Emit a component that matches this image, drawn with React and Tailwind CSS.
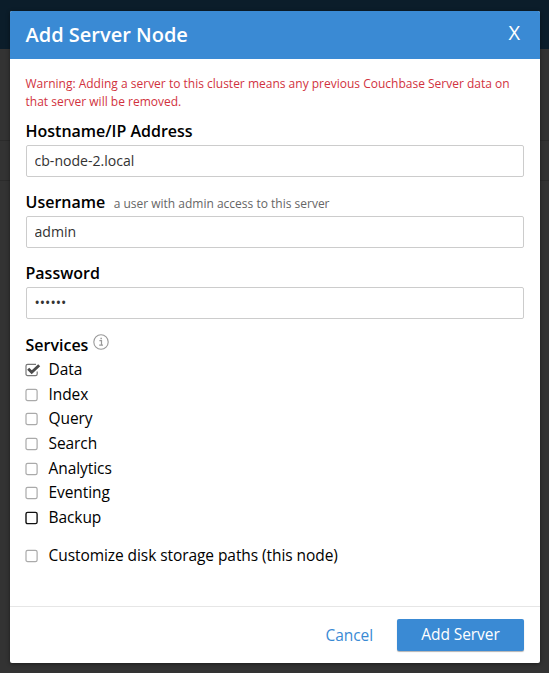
const services = ['Data', 'Index', 'Query', 'Search', 'Analytics', 'Eventing', 'Backup'];

function Box({ checked, strong }) {
  return (
    <svg className="mt-px mr-2 -ml-[0.5px] h-[14px] w-[15.5px] shrink-0" viewBox="0 0 15.5 14" fill="none">
      <path
        d={checked ? 'M12.2 8.5V10.9Q12.2 12.6 10.5 12.6H2.7Q1 12.6 1 10.9V3.1Q1 1.4 2.7 1.4H11' : 'M2.7 1.4H10.4Q12.1 1.4 12.1 3.1V10.9Q12.1 12.6 10.4 12.6H2.7Q1 12.6 1 10.9V3.1Q1 1.4 2.7 1.4Z'}
        stroke={checked ? '#777' : strong ? '#111' : '#aaa'}
        strokeWidth={strong ? 1.4 : 1.2}
      />
      {checked && <path d="M3.2 5.8 6.7 9.3 14.2 2.2" stroke="#4a4a4a" strokeWidth="2.9" />}
    </svg>
  );
}

function Field({ label, hint, type = 'text', value }) {
  return (
    <label className="block h-[71px]">
      <span className="flex h-[27px] items-baseline text-[16px] leading-[27px] font-semibold text-black">
        {label}
        {hint && <span className="ml-[8.4px] text-[12px] font-normal text-[#666]">{hint}</span>}
      </span>
      <input
        type={type}
        defaultValue={value}
        className="block h-8 w-full rounded-[2px] border border-[#ccc] bg-white px-2 pb-[2px] text-[14.08px] text-[#333] outline-none"
      />
    </label>
  );
}

export default function App() {
  return (
    <div className="h-[673px] w-[549px] overflow-hidden bg-[linear-gradient(#0b1d2a_49px,#333_49px,#333_140px,#2b2b2b_140px,#2b2b2b_141px,#333_141px,#333_180px,#2b2b2b_180px,#2b2b2b_181px,#333_181px)] px-[10px] pt-[11px] pr-[9px] font-['Open_Sans',sans-serif]">
      <div className="flex h-[652px] w-[530px] flex-col overflow-hidden rounded-[2px] bg-white shadow-[0_1px_4px_rgba(0,0,0,0.45)]">
        <header className="flex h-12 shrink-0 items-center justify-between bg-[#3a8ad4] pr-5 pl-[15.5px] text-white">
          <h2 className="text-[20px] font-semibold">Add Server Node</h2>
          <button className="pb-[4px] text-[20px]">X</button>
        </header>
        <main className="flex-1 pt-4 pr-4 pl-[15.5px]">
          <p className="mb-[11px] h-9 text-[12px] leading-[18px] text-[#d1323e]">
            Warning: Adding a server to this cluster means any previous Couchbase Server data on that server will be removed.
          </p>
          <div className="-mt-[4px]">
            <Field label="Hostname/IP Address" value="cb-node-2.local" />
            <Field label="Username" hint="a user with admin access to this server" value="admin" />
            <Field label="Password" type="password" value="123456" />
          </div>
          <div className="mb-[0.4px] flex h-[26px] items-center pt-[1px] text-[16px] font-semibold">
            Services
            <svg className="mb-[5px] ml-[4.5px] h-4 w-4" viewBox="0 0 16 16" fill="none" stroke="#999">
              <circle cx="8" cy="8" r="7.2" strokeWidth="1.1" />
              <path d="M6.4 6.7H8.5V11M6.2 11.2H10" strokeWidth="1.2" />
              <path d="M7.4 4.5H8.9" strokeWidth="1.5" />
            </svg>
          </div>
          {services.map((name) => (
            <label key={name} className="flex h-[24.64px] items-center text-[15.5px] tracking-[-0.07px] text-black">
              <Box checked={name === 'Data'} strong={name === 'Backup'} />
              {name}
            </label>
          ))}
          <label className="mt-[13.2px] flex h-[25px] items-center text-[15.5px] tracking-[-0.07px] text-black">
            <Box />
            Customize disk storage paths (this node)
          </label>
        </main>
        <footer className="flex h-[57px] shrink-0 items-center justify-end border-t border-[#e6e6e6] pr-4 text-[15.5px] tracking-[-0.07px]">
          <button className="mr-6 pt-[2px] text-[#3a8ad4]">Cancel</button>
          <button className="h-8 w-[127px] rounded-[2px] bg-[#3a8ad4] text-white shadow-[0_1px_1px_rgba(0,0,0,0.3)]">Add Server</button>
        </footer>
      </div>
    </div>
  );
}
